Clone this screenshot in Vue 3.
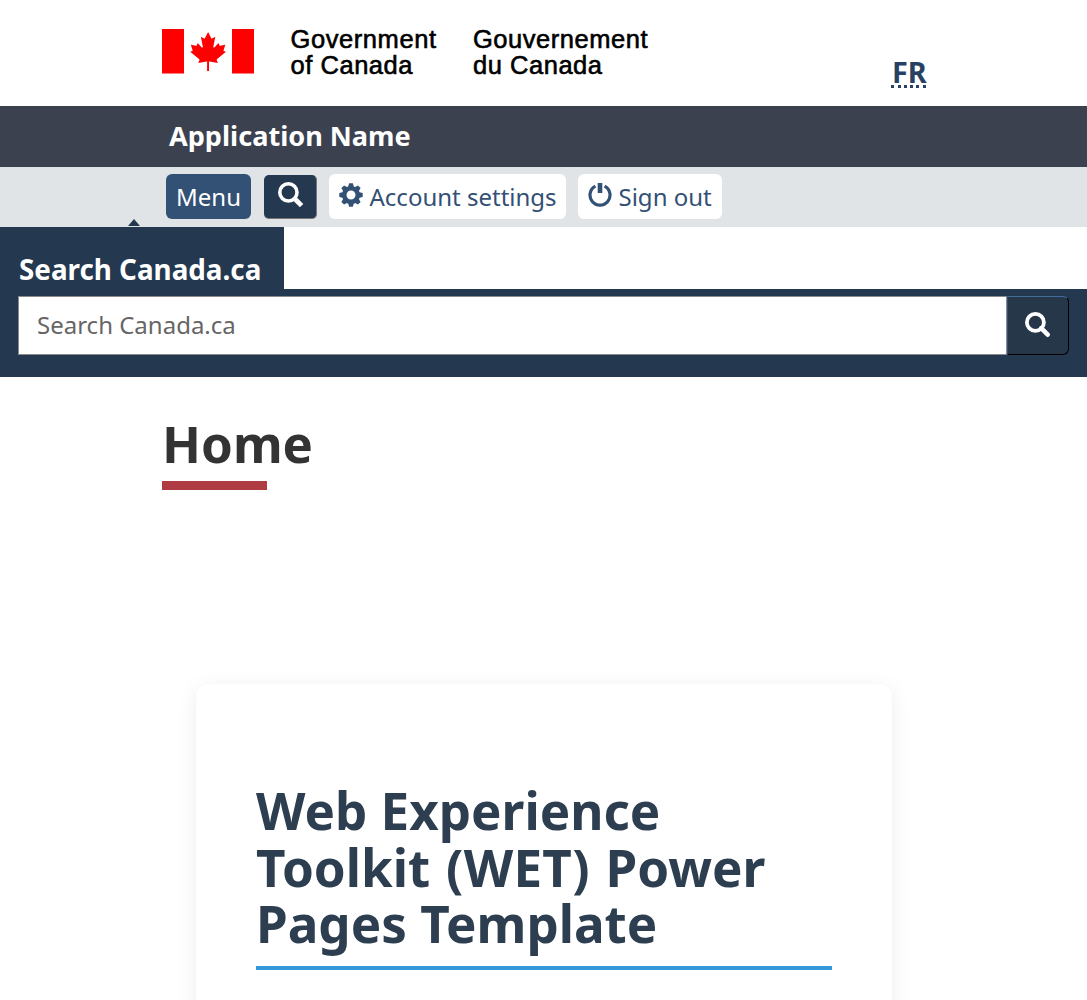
<script setup>
import { ref } from 'vue'

const appName = 'Application Name'
const query = ref('')
const teeth = [0, 45, 90, 135, 180, 225, 270, 315]
</script>

<template>
  <div class="page">
    <header>
      <div class="brand">
        <svg class="signature" width="500" height="60" viewBox="0 0 500 60" role="img" aria-label="Government of Canada / Gouvernement du Canada">
          <path fill="#f00" d="M0 9h22v44.500H0zM70 9h22v44.500H70zM45.200 38h1.800v13h-1.800z" />
          <path
            fill="#f00"
            transform="translate(0 8.200) scale(.0096)"
            d="m4890 4430-45-863a95 95 0 0 1 111-98l859 151-116-320a65 65 0 0 1 20-73l941-762-212-99a65 65 0 0 1-34-79l186-572-542 115a65 65 0 0 1-73-38l-105-247-423 454a65 65 0 0 1-111-57l204-1052-327 189a65 65 0 0 1-91-27l-332-652-332 652a65 65 0 0 1-91 27l-327-189 204 1052a65 65 0 0 1-111 57l-423-454-105 247a65 65 0 0 1-73 38l-542-115 186 572a65 65 0 0 1-34 79l-212 99 941 762a65 65 0 0 1 20 73l-116 320 859-151a95 95 0 0 1 111 98l-45 863z"
          />
          <g class="signature-text">
            <text x="128.500" y="28" textLength="145.500">Government</text>
            <text x="128.500" y="53.500" textLength="122">of Canada</text>
            <text x="311" y="28" textLength="174.500">Gouvernement</text>
            <text x="311" y="53.500" textLength="129">du Canada</text>
          </g>
        </svg>
        <a class="lang"><abbr title="Français">FR</abbr></a>
      </div>
      <div class="app-bar"><a>{{ appName }}</a></div>
      <nav class="tools">
        <button class="btn menu">Menu</button>
        <button class="btn find" aria-label="Search">
          <svg width="26" height="26" viewBox="0 0 26 26" fill="none" stroke="#fff">
            <circle cx="10.400" cy="10.400" r="8.600" stroke-width="3.600" />
            <path d="m16.200 16.200 7.400 7.400" stroke-width="4.800" />
          </svg>
        </button>
        <a class="btn light account">
          <svg width="24" height="24" viewBox="-12 -12 24 24">
            <path v-for="angle in teeth" :key="angle" fill="currentColor" :transform="`rotate(${angle})`" d="M-3-7.500-1.900-11.700h3.800l1.100 4.200z" />
            <circle r="6.800" fill="none" stroke="currentColor" stroke-width="4.600" />
          </svg>
          <span>Account settings</span>
        </a>
        <a class="btn light signout">
          <svg width="24" height="24" viewBox="0 0 24 24" fill="none" stroke="currentColor">
            <path d="M7.400 3.200a10 10 0 1 0 9.200 0" stroke-width="3.200" />
            <path d="M12 0v10" stroke-width="4.600" />
          </svg>
          <span>Sign out</span>
        </a>
        <i class="caret"></i>
      </nav>
      <section class="search">
        <h2>Search Canada.ca</h2>
        <form @submit.prevent>
          <input v-model="query" type="search" placeholder="Search Canada.ca" />
          <button aria-label="Search">
            <svg width="26" height="26" viewBox="0 0 26 26" fill="none" stroke="#fff">
              <circle cx="10.400" cy="10.400" r="8.500" stroke-width="3.800" />
              <path d="m16.200 16.200 6.500 6.500" stroke-width="4.600" stroke-linecap="round" />
            </svg>
          </button>
        </form>
      </section>
    </header>
    <main>
      <h1>Home</h1>
      <article class="card">
        <h2>Web Experience <span class="spread">Toolkit <span class="acronym">(WET)</span> Power</span> Pages Template</h2>
      </article>
    </main>
  </div>
</template>

<style>
html,
body {
  overflow: hidden;
}
</style>

<style scoped>
.page {
  height: 1000px;
  overflow: hidden;
  background: #fff;
  color: #333;
  font-family: "Noto Sans", sans-serif;
}
.page * {
  box-sizing: border-box;
}
.brand {
  display: flex;
  justify-content: space-between;
  height: 106px;
  padding: 20px 161px 0 162px;
}
.signature-text {
  font: 25.500px "Liberation Sans", sans-serif;
  fill: #000;
  stroke: #000;
  stroke-width: 0.600px;
}
.lang {
  padding-top: 33px;
  color: #284162;
  font-size: 28.800px;
  font-weight: 700;
  line-height: 38px;
}
.lang abbr {
  display: block;
  width: 35px;
  height: 35px;
  padding-left: 1px;
  border-bottom: 3px dotted #284162;
  text-decoration: none;
}
.app-bar {
  height: 61px;
  padding-left: 169px;
  background: #3b414f;
  color: #fff;
  font-size: 27.100px;
  font-weight: 700;
  line-height: 60px;
}
.tools {
  position: relative;
  display: flex;
  height: 60px;
  padding: 7px 0 0 166px;
  background: #e1e4e7;
}
.btn {
  display: flex;
  height: 45px;
  border: 0;
  border-radius: 6px;
  font: 24px/46px "Noto Sans", sans-serif;
  white-space: nowrap;
}
.menu {
  width: 85px;
  justify-content: center;
  padding: 0;
  background: #335075;
  color: #fff;
}
.find {
  width: 53px;
  height: 44px;
  margin: 1px 0 0 13px;
  padding: 7px 0 0 13px;
  border: solid #777;
  border-width: 0 1px 1px 0;
  border-radius: 5px;
  background: #243850;
}
.find svg {
  margin-left: 1px;
}
.light {
  padding-left: 10px;
  gap: 6.500px;
  background: #fff;
  color: #335075;
}
.light svg {
  margin-top: 9px;
}
.account {
  width: 237px;
  margin-left: 12px;
}
.signout {
  width: 144px;
  margin-left: 12px;
}
.caret {
  position: absolute;
  left: 128px;
  bottom: 1px;
  border: 6px solid transparent;
  border-top: 0;
  border-bottom: 7px solid #243850;
}
.search h2 {
  width: 284px;
  height: 62px;
  margin: 0;
  padding: 22px 0 0 19px;
  background: #243850;
  color: #fff;
  font-size: 27.800px;
  font-weight: 700;
  line-height: 40px;
}
.search form {
  display: flex;
  height: 88px;
  padding: 7px 18px 22px;
  background: #243850;
}
.search input {
  flex: 1;
  height: 59px;
  min-width: 0;
  padding: 0 18px 2px;
  border: 1px solid #8a8a8a;
  border-radius: 0;
  background: #fff;
  font: 24px "Noto Sans", sans-serif;
}
.search input::placeholder {
  color: #666;
}
.search form button {
  width: 62px;
  height: 59px;
  padding: 1px 0 0;
  border: 1px solid;
  border-color: #436c9c #000 #000 #335075;
  border-radius: 0 6px 6px 0;
  background: #26374a;
}
main h1 {
  width: 763px;
  height: 113px;
  margin: 0 162px;
  padding-top: 36px;
  background: linear-gradient(#af3c43, #af3c43) 0 104px / 105px 9px no-repeat;
  color: #333;
  font-size: 51px;
  font-weight: 700;
  line-height: 60px;
}
.card {
  width: 696px;
  height: 500px;
  margin: 194px 0 0 196px;
  padding: 98px 60px 0;
  border-radius: 12px;
  background: #fff;
  box-shadow: 0 4px 20px rgba(0, 0, 0, 0.08);
}
.card h2 {
  height: 188px;
  margin: 0;
  border-bottom: 4px solid #3498db;
  color: #2c3e50;
  font-size: 51.130px;
  font-weight: 700;
  line-height: 56.600px;
}
.spread {
  word-spacing: 2.500px;
}
.acronym {
  letter-spacing: 0.300px;
}
</style>
